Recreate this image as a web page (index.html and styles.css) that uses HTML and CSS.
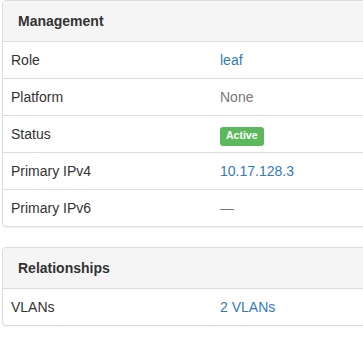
FILE: index.html
```html
<!DOCTYPE html>
<html>
<head>
<meta charset="utf-8">
<link rel="stylesheet" href="styles.css">
</head>
<body>
<div class="page">
  <div class="panel">
    <div class="panel-heading"><strong>Management</strong></div>
    <table class="attr-table">
      <tr><td class="key">Role</td><td><a href="#">leaf</a></td></tr>
      <tr><td class="key">Platform</td><td><span class="muted">None</span></td></tr>
      <tr><td class="key">Status</td><td><span class="label label-success">Active</span></td></tr>
      <tr><td class="key">Primary IPv4</td><td><a href="#">10.17.128.3</a></td></tr>
      <tr><td class="key">Primary IPv6</td><td><span class="muted">&mdash;</span></td></tr>
    </table>
  </div>
  <div class="panel">
    <div class="panel-heading"><strong>Relationships</strong></div>
    <table class="attr-table">
      <tr><td class="key">VLANs</td><td><a href="#">2 VLANs</a></td></tr>
    </table>
  </div>
</div>
</body>
</html>
```
FILE: styles.css
```css
html, body {
  margin: 0;
  padding: 0;
  background: #fff;
  overflow: hidden;
}
body {
  font-family: "Liberation Sans", Arial, sans-serif;
  font-size: 14px;
  line-height: 20px;
  color: #333;
}
.page {
  padding-left: 2px;
  width: 440px;
}
.panel {
  background: #fff;
  border: 1px solid #ddd;
  border-radius: 4px;
  box-shadow: 0 1px 1px rgba(0,0,0,0.05);
  margin-bottom: 20px;
  overflow: hidden;
}
.panel-heading {
  background: #f5f5f5;
  border-bottom: 1px solid #ddd;
  padding: 10px 15px;
  color: #333;
}
.panel-heading strong {
  font-weight: bold;
}
.attr-table {
  width: 100%;
  border-collapse: collapse;
  table-layout: fixed;
}
.attr-table td {
  padding: 8px;
  line-height: 20px;
  vertical-align: top;
  border-top: 1px solid #ddd;
}
.attr-table tr:first-child td {
  border-top: 0;
}
.attr-table td.key {
  width: 193px;
}
a {
  color: #337ab7;
  text-decoration: none;
}
.muted {
  color: #777;
}
.label {
  display: inline;
  padding: 2px 6px 5px;
  font-size: 10.5px;
  font-weight: bold;
  line-height: 1;
  color: #fff;
  border-radius: 3px;
  white-space: nowrap;
  vertical-align: baseline;
}
.label-success {
  background: #5cb85c;
}
```
